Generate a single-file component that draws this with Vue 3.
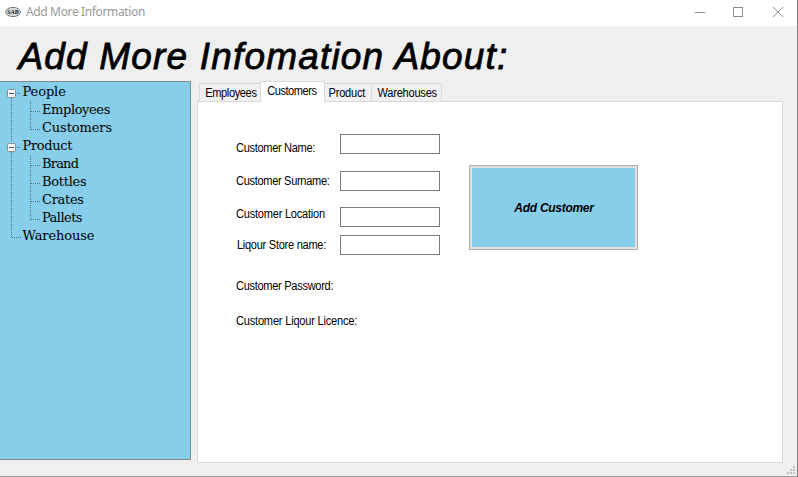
<script setup>
const tree = [
  { text: 'People', child: false },
  { text: 'Employees', child: true },
  { text: 'Customers', child: true },
  { text: 'Product', child: false },
  { text: 'Brand', child: true },
  { text: 'Bottles', child: true },
  { text: 'Crates', child: true },
  { text: 'Pallets', child: true },
  { text: 'Warehouse', child: false },
]
const childLines = [29.5, 47.5, 83.5, 101.5, 119.5, 137.5]
const tabs = ['Employees', 'Customers', 'Product', 'Warehouses']
const grip = [[6, 0], [3, 3], [6, 3], [0, 6], [3, 6], [6, 6]]
</script>

<template>
  <div class="window">
    <header class="titlebar">
      <svg class="logo" width="16" height="12" viewBox="0 0 16 12">
        <ellipse cx="8" cy="6" rx="7.4" ry="4.6" fill="#f4f4f4" stroke="#777" stroke-width="1" />
        <ellipse cx="8" cy="6" rx="6" ry="3.3" fill="#e4e4e4" stroke="#aaa" stroke-width=".5" />
        <text x="8" y="8.2" text-anchor="middle" class="logo-text">SAB</text>
      </svg>
      <span class="caption">Add More Information</span>
      <svg class="controls" width="92" height="12" viewBox="0 0 92 12" shape-rendering="crispEdges">
        <path d="M2 6.5h10" stroke="#8e8e8e" />
        <path d="M40.5 1.5h9v9h-9z" fill="none" stroke="#8e8e8e" />
        <path d="M80 1l10 10M90 1l-10 10" stroke="#8e8e8e" shape-rendering="auto" />
      </svg>
    </header>
    <h1>Add More Infomation About:</h1>
    <main>
      <nav class="tree">
        <svg class="lines" width="60" height="170" viewBox="0 0 60 170">
          <g fill="none" stroke="#4f6f7d" stroke-dasharray="1 1" shape-rendering="crispEdges">
            <path d="M11.5 16v43M11.5 70v86M17 11.5h4M17 65.5h4M12 155.5h9" />
            <path d="M30.5 19v29M30.5 73v65" />
            <path v-for="y in childLines" :key="y" :d="`M31 ${y}h9`" />
          </g>
          <g v-for="y in [7, 61]" :key="y">
            <rect x="7.5" :y="y + .5" width="8" height="8" rx="1" fill="#f3f3f1" stroke="#8c8c8c" />
            <path :d="`M9 ${y + 4.5}h5`" stroke="#4059a5" />
          </g>
        </svg>
        <div v-for="n in tree" :key="n.text" class="node" :class="[n.text.toLowerCase(), { child: n.child }]">{{ n.text }}</div>
      </nav>
      <section class="tabcontrol">
        <div class="tabs">
          <div v-for="t in tabs" :key="t" class="tab" :class="['tab-' + t.toLowerCase(), { active: t === 'Customers' }]"><span>{{ t }}</span></div>
        </div>
        <div class="page">
          <div class="labels">
            <label class="name">Customer Name:</label>
            <label class="surname">Customer Surname:</label>
            <label class="location">Customer Location</label>
            <label class="store">Liqour Store name:</label>
            <label class="password">Customer Password:</label>
            <label class="licence">Customer Liqour Licence:</label>
          </div>
          <div class="inputs">
            <input type="text" /><input type="text" /><input type="text" /><input type="text" />
          </div>
          <button><span>Add Customer</span></button>
        </div>
      </section>
    </main>
    <svg class="grip" width="8" height="8" viewBox="0 0 8 8">
      <rect v-for="(g, i) in grip" :key="i" :x="g[0]" :y="g[1]" width="2" height="2" fill="#bfbfbf" />
    </svg>
  </div>
</template>

<style>
body { margin: 0; overflow: hidden; }
</style>

<style scoped>
* { box-sizing: border-box; }
.window {
  position: relative; width: 798px; height: 477px; background: #efefef;
  border-right: 1px solid #7c7c7c; border-bottom: 1px solid #9c9c9c;
  font-family: "Liberation Sans", Arial, sans-serif; color: #000;
}
.titlebar { display: flex; align-items: center; height: 26px; background: #fff; padding: 0 12px 2px 5px; }
.logo-text { font-size: 6px; font-weight: 700; font-family: "Liberation Serif", serif; fill: #111; }
.caption { margin-left: 5px; font: 12px/16px "Noto Sans", sans-serif; letter-spacing: -.36px; color: #999; white-space: nowrap; }
.controls { margin-left: auto; }
h1 {
  margin: 0; height: 55px; padding: 9px 0 0 18.5px; font-size: 37px; line-height: 44px;
  font-weight: 400; font-style: italic; letter-spacing: 1.18px; white-space: nowrap;
  -webkit-text-stroke: .8px #000;
}
main { display: flex; }
.tree {
  position: relative; width: 191px; height: 379px; background: #87ceeb;
  border: 1px solid #828790; border-left: 0; padding-top: 1px;
}
.lines { position: absolute; left: 0; top: 0; }
.node { position: relative; height: 18px; padding-left: 22.5px; font: 13px/18px "DejaVu Serif", serif; letter-spacing: -.1px; white-space: nowrap; }
.node.child { padding-left: 42px; }
.employees { letter-spacing: -.4px; }
.brand { letter-spacing: -.8px; }
.product { letter-spacing: -.35px; }
.bottles { letter-spacing: -.3px; }
.crates { letter-spacing: -.3px; }
.pallets { letter-spacing: -.55px; }
.tabcontrol { margin-left: 6px; width: 586px; }
.tabs { display: flex; align-items: flex-end; height: 21px; padding-left: 2px; margin-bottom: -1px; position: relative; }
.tab {
  height: 19px; border: 1px solid #d9d9d9; border-left: 0; background: #f0f0f0; text-align: center;
  font-size: 12px; line-height: 18px; letter-spacing: -.25px; white-space: nowrap;
}
.tab span { display: inline-block; transform: scaleX(.92); }
.tab-employees { width: 61px; border-left: 1px solid #d9d9d9; border-right: 0; padding-left: 1px; letter-spacing: -.4px; }
.tab-customers { width: 65px; }
.tab-product { width: 47px; padding-right: 2px; }
.tab-warehouses { width: 70px; padding-left: 2px; }
.tab.active { height: 21px; background: #fff; border-left: 1px solid #d9d9d9; border-bottom: 0; line-height: 19px; letter-spacing: -.47px; padding-right: 1px; }
.page { display: flex; height: 362px; background: #fff; border: 1px solid #d9d9d9; }
.labels { width: 142px; padding: 39px 0 0 38px; display: flex; flex-direction: column; }
label { height: 14px; font-size: 12px; line-height: 14px; letter-spacing: -.34px; white-space: nowrap; transform: scaleX(.92); transform-origin: 0 50%; }
.surname, .location { margin-top: 19px; }
.location { letter-spacing: -.24px; }
.store { margin-top: 17px; padding-left: 1px; letter-spacing: -.29px; }
.password { margin-top: 27px; letter-spacing: -.32px; }
.licence { margin-top: 21px; letter-spacing: -.21px; }
.inputs { width: 100px; padding-top: 32px; display: flex; flex-direction: column; }
input { width: 100px; height: 20px; margin: 0; padding: 0; border: 1px solid #7a7a7a; background: #fff; outline: 0; }
input:nth-child(2) { margin-top: 17px; }
input:nth-child(3) { margin-top: 16px; }
input:nth-child(4) { margin-top: 8px; }
button {
  margin: 63px 0 0 29px; width: 169px; height: 85px; padding: 0 0 0 1px; background: #87ceeb;
  border: 1px solid #adadad; box-shadow: inset 0 0 0 2px #e1e1e1; border-radius: 0; color: #000;
  font: italic 700 12px/14px "Liberation Sans", Arial, sans-serif; letter-spacing: -.28px;
}
.grip { position: absolute; right: 2px; bottom: 2px; }
</style>
